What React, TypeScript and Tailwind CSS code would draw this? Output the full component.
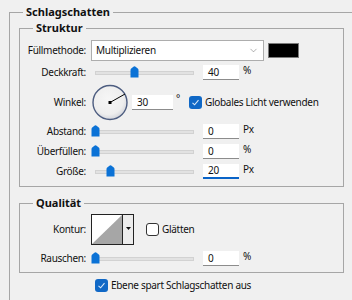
import { ChevronDown } from "lucide-react";

function Thumb() {
  return (
    <svg width="9" height="12" viewBox="0 0 9 12" className="absolute top-[4px]">
      <path d="M0.5 4 Q0.5 3 1.5 2.2 L3.8 0.6 Q4.5 0.1 5.2 0.6 L7.5 2.2 Q8.5 3 8.5 4 V11.5 H0.5 Z" fill="#0b72d6" />
    </svg>
  );
}

function Slider({ pos }: { pos: number }) {
  return (
    <div className="relative w-[108px] h-[20px] shrink-0">
      <div className="absolute left-[4px] top-[9px] w-[99px] h-[4px] bg-[#e2e2e2] border border-[#d2d2d2]" />
      <div className="absolute top-0 h-[20px]" style={{ left: 4 + pos - 4.5 }}>
        <Thumb />
      </div>
    </div>
  );
}

function NumInput({ value, active, w = 36 }: { value: string; active?: boolean; w?: number }) {
  return (
    <div
      className={`h-[15px] bg-white pl-[5px] flex items-center leading-none shrink-0 ${
        active ? "border-b-2 border-[#0a64c8]" : "border-b border-[#8c8c8c]"
      }`}
      style={{ width: w }}
    >
      {value}
    </div>
  );
}

function Check({ checked }: { checked: boolean }) {
  return checked ? (
    <div className="w-[13px] h-[13px] rounded-[3px] bg-[#1068c6] flex items-center justify-center shrink-0">
      <svg width="9" height="9" viewBox="0 0 9 9">
        <path d="M1.5 4.8 L3.6 6.8 L7.5 2.2" stroke="#d8e8f8" strokeWidth="1.1" fill="none" />
      </svg>
    </div>
  ) : (
    <div className="w-[13px] h-[13px] rounded-[3px] bg-white border border-[#333] shrink-0" />
  );
}

function Label({ children }: { children: React.ReactNode }) {
  return <div className="w-[67px] pr-[1px] text-right shrink-0 mr-[4px]">{children}</div>;
}

function SliderRow({ label, pos, value, unit, active }: { label: string; pos: number; value: string; unit: string; active?: boolean }) {
  return (
    <div className="flex items-center h-[20px]">
      <Label>{label}</Label>
      <Slider pos={pos} />
      <div className="ml-[4px]">
        <NumInput value={value} active={active} />
      </div>
      <span className="ml-[4px] -mt-[4px]">{unit}</span>
    </div>
  );
}

function Dial() {
  return (
    <svg width="37" height="37" viewBox="0 0 37 37" className="shrink-0">
      <defs>
        <radialGradient id="dg" cx="45%" cy="40%" r="60%">
          <stop offset="0%" stopColor="#f6f6f6" />
          <stop offset="75%" stopColor="#eeeeee" />
          <stop offset="100%" stopColor="#d4d6dc" />
        </radialGradient>
      </defs>
      <circle cx="19" cy="18.5" r="17" fill="url(#dg)" stroke="#4d5d80" strokeWidth="1.4" />
      <line x1="19" y1="18.5" x2="34" y2="10" stroke="#000" strokeWidth="1" />
      <rect x="17.5" y="17" width="3" height="3" fill="#000" />
    </svg>
  );
}

export default function App() {
  return (
    <div className="w-[352px] h-[300px] overflow-hidden bg-[#f0f0f0] text-[10px] tracking-[-0.3px] text-[#111] font-['Noto_Sans',sans-serif] pt-[12px] pl-[9px]">
      <div className="relative w-[400px] h-[320px] border-l border-t border-[#a6a6a6]">
        <div className="absolute left-[13px] -top-[9px] px-[3px] bg-[#f0f0f0] font-bold text-[11px] tracking-normal leading-[16px]">
          Schlagschatten
        </div>

        {/* Struktur */}
        <div className="relative ml-[9px] mt-[15px] w-[325px] h-[159px] border border-[#a6a6a6] pt-[11px]">
          <div className="absolute left-[13px] -top-[9px] px-[3px] bg-[#f0f0f0] font-bold text-[11px] tracking-normal leading-[16px]">
            Struktur
          </div>

          <div className="flex items-center h-[21px]">
            <Label>Füllmethode:</Label>
            <div className="w-[173px] h-[21px] bg-white border border-[#adadad] flex items-center pl-[4px] justify-between pr-[4px]">
              <span>Multiplizieren</span>
              <ChevronDown size={11} strokeWidth={1} className="text-[#555]" />
            </div>
            <div className="ml-[4px] w-[31px] h-[15px] bg-black border border-[#7c7c7c]" />
          </div>

          <div className="mt-[1px]">
            <SliderRow label="Deckkraft:" pos={39.5} value="40" unit="%" />
          </div>

          <div className="flex items-center h-[36px] mt-[2px]">
            <Label>Winkel:</Label>
            <Dial />
            <div className="ml-[4px]">
              <NumInput value="30" w={41} />
            </div>
            <span className="ml-[3px] -mt-[8px]">°</span>
            <div className="ml-[9px] flex items-center gap-[3px]">
              <Check checked />
              <span>Globales Licht verwenden</span>
            </div>
          </div>

          <div className="mt-[1px]">
            <SliderRow label="Abstand:" pos={0.5} value="0" unit="Px" />
          </div>
          <SliderRow label="Überfüllen:" pos={0.5} value="0" unit="%" />
          <SliderRow label="Größe:" pos={15} value="20" unit="Px" active />
        </div>

        {/* Qualität */}
        <div className="relative ml-[9px] mt-[16px] w-[325px] h-[70px] border border-[#a6a6a6] pt-[10px]">
          <div className="absolute left-[13px] -top-[9px] px-[3px] bg-[#f0f0f0] font-bold text-[11px] tracking-normal leading-[16px]">
            Qualität
          </div>

          <div className="flex items-center h-[30px]">
            <Label>Kontur:</Label>
            <div className="w-[43px] h-[31px] border border-[#222] flex bg-white">
              <svg width="30" height="29" viewBox="0 0 30 29" className="shrink-0">
                <polygon points="0,29 30,0 30,29" fill="#a6a6a6" />
              </svg>
              <div className="w-[11px] h-full border-l border-[#222] bg-[#ececec] flex justify-center pt-[12px]">
                <svg width="5" height="3" viewBox="0 0 5 3">
                  <polygon points="0,0 5,0 2.5,3" fill="#111" />
                </svg>
              </div>
            </div>
            <div className="ml-[12px] flex items-center gap-[3px]">
              <Check checked={false} />
              <span>Glätten</span>
            </div>
          </div>

          <div className="mt-[4px]">
            <SliderRow label="Rauschen:" pos={0.5} value="0" unit="%" />
          </div>
        </div>

        <div className="flex items-center h-[18px] mt-[3px] ml-[85px] gap-[3px]">
          <Check checked />
          <span>Ebene spart Schlagschatten aus</span>
        </div>
      </div>
    </div>
  );
}
